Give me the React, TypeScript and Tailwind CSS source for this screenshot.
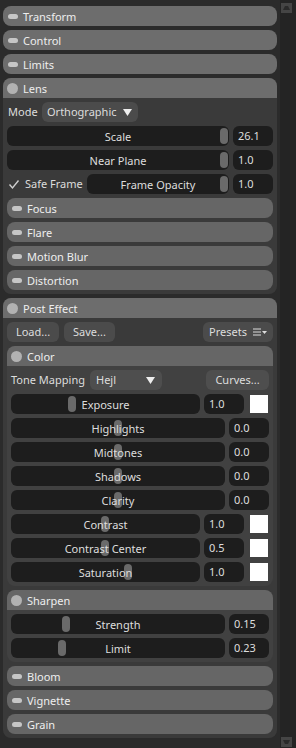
import React from 'react';

type HeaderProps = { label: string; open?: boolean; nested?: boolean };

function Header({ label, open, nested }: HeaderProps) {
    return (
        <div
            className={`h-[20px] shrink-0 flex items-center ${open ? 'rounded-t-[8px]' : 'rounded-[8px]'} ${nested ? 'bg-[#666666]' : 'bg-[#6d6d6d]'}`}
        >
            {open ? (
                <span className="ml-[4px] mr-[5px] w-[11px] h-[11px] rounded-full bg-[#b2b2b2]" />
            ) : (
                <span className="ml-[5px] mr-[5px] w-[10px] h-[5px] rounded-full bg-[#c6c6c6]" />
            )}
            <span className="text-[#eeeeee] leading-none">{label}</span>
        </div>
    );
}

function Slider({ label, pos, className = '' }: { label: string; pos: number; className?: string }) {
    return (
        <div className={`relative h-[20px] rounded-[6px] bg-[#1d1d1d] flex items-center justify-center ${className}`}>
            <span className="absolute top-[2px] w-[8px] h-[16px] rounded-full bg-[#6a6a6a]" style={{ left: pos }} />
            <span className="relative text-[#dddddd] leading-none">{label}</span>
        </div>
    );
}

function Value({ v }: { v: string }) {
    return (
        <div className="w-[40px] h-[20px] shrink-0 rounded-[6px] bg-[#1d1d1d] flex items-center pl-[5px] text-[#dddddd]">
            {v}
        </div>
    );
}

function Swatch() {
    return (
        <div className="w-[20px] h-[20px] shrink-0 ml-[1px] flex items-center justify-center">
            <div className="w-[18px] h-[18px] bg-white" />
        </div>
    );
}

function Arrow() {
    return (
        <svg width="9" height="7" viewBox="0 0 9 7" className="shrink-0">
            <path d="M0 0 H9 L4.5 7 Z" fill="#eeeeee" />
        </svg>
    );
}

function Button({ label, className = '' }: { label: string; className?: string }) {
    return (
        <div className={`h-[20px] rounded-[6px] bg-[#4b4b4b] flex items-center justify-center text-[#dddddd] ${className}`}>
            {label}
        </div>
    );
}

function ScrollBtn({ down }: { down?: boolean }) {
    return (
        <div className="w-[11px] h-[10px] ml-[1px] bg-[#454545] flex items-center justify-center">
            <svg width="7" height="4" viewBox="0 0 7 4">
                {down ? <path d="M0 0 H7 L5 4 H2 Z" fill="#2a2a2a" /> : <path d="M2 0 H5 L7 4 H0 Z" fill="#2a2a2a" />}
            </svg>
        </div>
    );
}

export default function App() {
    const colorRows = [
        { label: 'Highlights', pos: 103 },
        { label: 'Midtones', pos: 103 },
        { label: 'Shadows', pos: 103 },
        { label: 'Clarity', pos: 103 },
    ];
    const swatchRows = [
        { label: 'Contrast', pos: 90, v: '1.0' },
        { label: 'Contrast Center', pos: 90, v: '0.5' },
        { label: 'Saturation', pos: 113, v: '1.0' },
    ];

    return (
        <div className="w-[296px] h-[748px] bg-[#2b2b2b] flex overflow-hidden font-['Noto_Sans','Open_Sans',sans-serif] text-[11px]">
            <div className="w-[280px] px-[3px] pt-[6px] flex flex-col gap-[4px]">
                <Header label="Transform" />
                <Header label="Control" />
                <Header label="Limits" />

                {/* Lens */}
                <div className="rounded-[8px] bg-[#3a3a3a] flex flex-col">
                    <Header label="Lens" open />
                    <div className="p-[4px] flex flex-col gap-[4px]">
                        <div className="h-[20px] flex items-center">
                            <span className="ml-[1px] w-[34px] text-[#dddddd]">Mode</span>
                            <div className="w-[96px] h-[20px] rounded-[6px] bg-[#4b4b4b] flex items-center pl-[5px] pr-[6px] justify-between text-[#dddddd]">
                                <span>Orthographic</span>
                                <Arrow />
                            </div>
                        </div>
                        <div className="flex gap-[4px]">
                            <Slider label="Scale" pos={213} className="flex-1" />
                            <Value v="26.1" />
                        </div>
                        <div className="flex gap-[4px]">
                            <Slider label="Near Plane" pos={213} className="flex-1" />
                            <Value v="1.0" />
                        </div>
                        <div className="flex gap-[4px]">
                            <div className="w-[76px] h-[20px] flex items-center text-[#dddddd]">
                                <svg width="12" height="11" viewBox="0 0 12 11" className="ml-[1px] mr-[5px]">
                                    <path d="M1.5 5.5 L4.5 9 L10.5 1.5" fill="none" stroke="#cfcfcf" strokeWidth="1.4" />
                                </svg>
                                <span>Safe Frame</span>
                            </div>
                            <Slider label="Frame Opacity" pos={133} className="flex-1" />
                            <Value v="1.0" />
                        </div>
                        <Header label="Focus" nested />
                        <Header label="Flare" nested />
                        <Header label="Motion Blur" nested />
                        <Header label="Distortion" nested />
                    </div>
                </div>

                {/* Post Effect */}
                <div className="rounded-[8px] bg-[#3a3a3a] flex flex-col">
                    <Header label="Post Effect" open />
                    <div className="p-[4px] flex flex-col gap-[4px]">
                        <div className="flex gap-[5px]">
                            <Button label="Load..." className="w-[52px]" />
                            <Button label="Save..." className="w-[51px]" />
                            <div className="ml-auto w-[70px] h-[20px] rounded-[6px] bg-[#4b4b4b] flex items-center justify-center gap-[6px] text-[#dddddd]">
                                <span>Presets</span>
                                <svg width="14" height="8" viewBox="0 0 14 8">
                                    <path d="M0 1 H8 M0 4 H8 M0 7 H8" stroke="#dddddd" strokeWidth="1" />
                                    <path d="M9 3 H14 L11.5 6 Z" fill="#dddddd" />
                                </svg>
                            </div>
                        </div>

                        {/* Color */}
                        <div className="rounded-[8px] bg-[#414141] flex flex-col">
                            <Header label="Color" open nested />
                            <div className="p-[4px] flex flex-col gap-[4px]">
                                <div className="h-[20px] flex items-center">
                                    <span className="w-[79px] text-[#dddddd]">Tone Mapping</span>
                                    <div className="w-[72px] h-[20px] rounded-[6px] bg-[#4e4e4e] flex items-center pl-[6px] pr-[7px] justify-between text-[#dddddd]">
                                        <span>Hejl</span>
                                        <Arrow />
                                    </div>
                                    <Button label="Curves..." className="ml-auto w-[63px] bg-[#4e4e4e]" />
                                </div>
                                <div className="flex gap-[4px]">
                                    <Slider label="Exposure" pos={57} className="flex-1" />
                                    <Value v="1.0" />
                                    <Swatch />
                                </div>
                                {colorRows.map((r) => (
                                    <div key={r.label} className="flex gap-[4px]">
                                        <Slider label={r.label} pos={r.pos} className="flex-1" />
                                        <Value v="0.0" />
                                    </div>
                                ))}
                                {swatchRows.map((r) => (
                                    <div key={r.label} className="flex gap-[4px]">
                                        <Slider label={r.label} pos={r.pos} className="flex-1" />
                                        <Value v={r.v} />
                                        <Swatch />
                                    </div>
                                ))}
                            </div>
                        </div>

                        {/* Sharpen */}
                        <div className="rounded-[8px] bg-[#414141] flex flex-col">
                            <Header label="Sharpen" open nested />
                            <div className="p-[4px] flex flex-col gap-[4px]">
                                <div className="flex gap-[4px]">
                                    <Slider label="Strength" pos={51} className="flex-1" />
                                    <Value v="0.15" />
                                </div>
                                <div className="flex gap-[4px]">
                                    <Slider label="Limit" pos={47} className="flex-1" />
                                    <Value v="0.23" />
                                </div>
                            </div>
                        </div>

                        <Header label="Bloom" nested />
                        <Header label="Vignette" nested />
                        <Header label="Grain" nested />
                    </div>
                </div>
            </div>

            {/* scrollbar */}
            <div className="w-[16px] bg-[#242424] flex flex-col justify-between pt-[3px] pb-[1px]">
                <ScrollBtn />
                <ScrollBtn down />
            </div>
        </div>
    );
}
